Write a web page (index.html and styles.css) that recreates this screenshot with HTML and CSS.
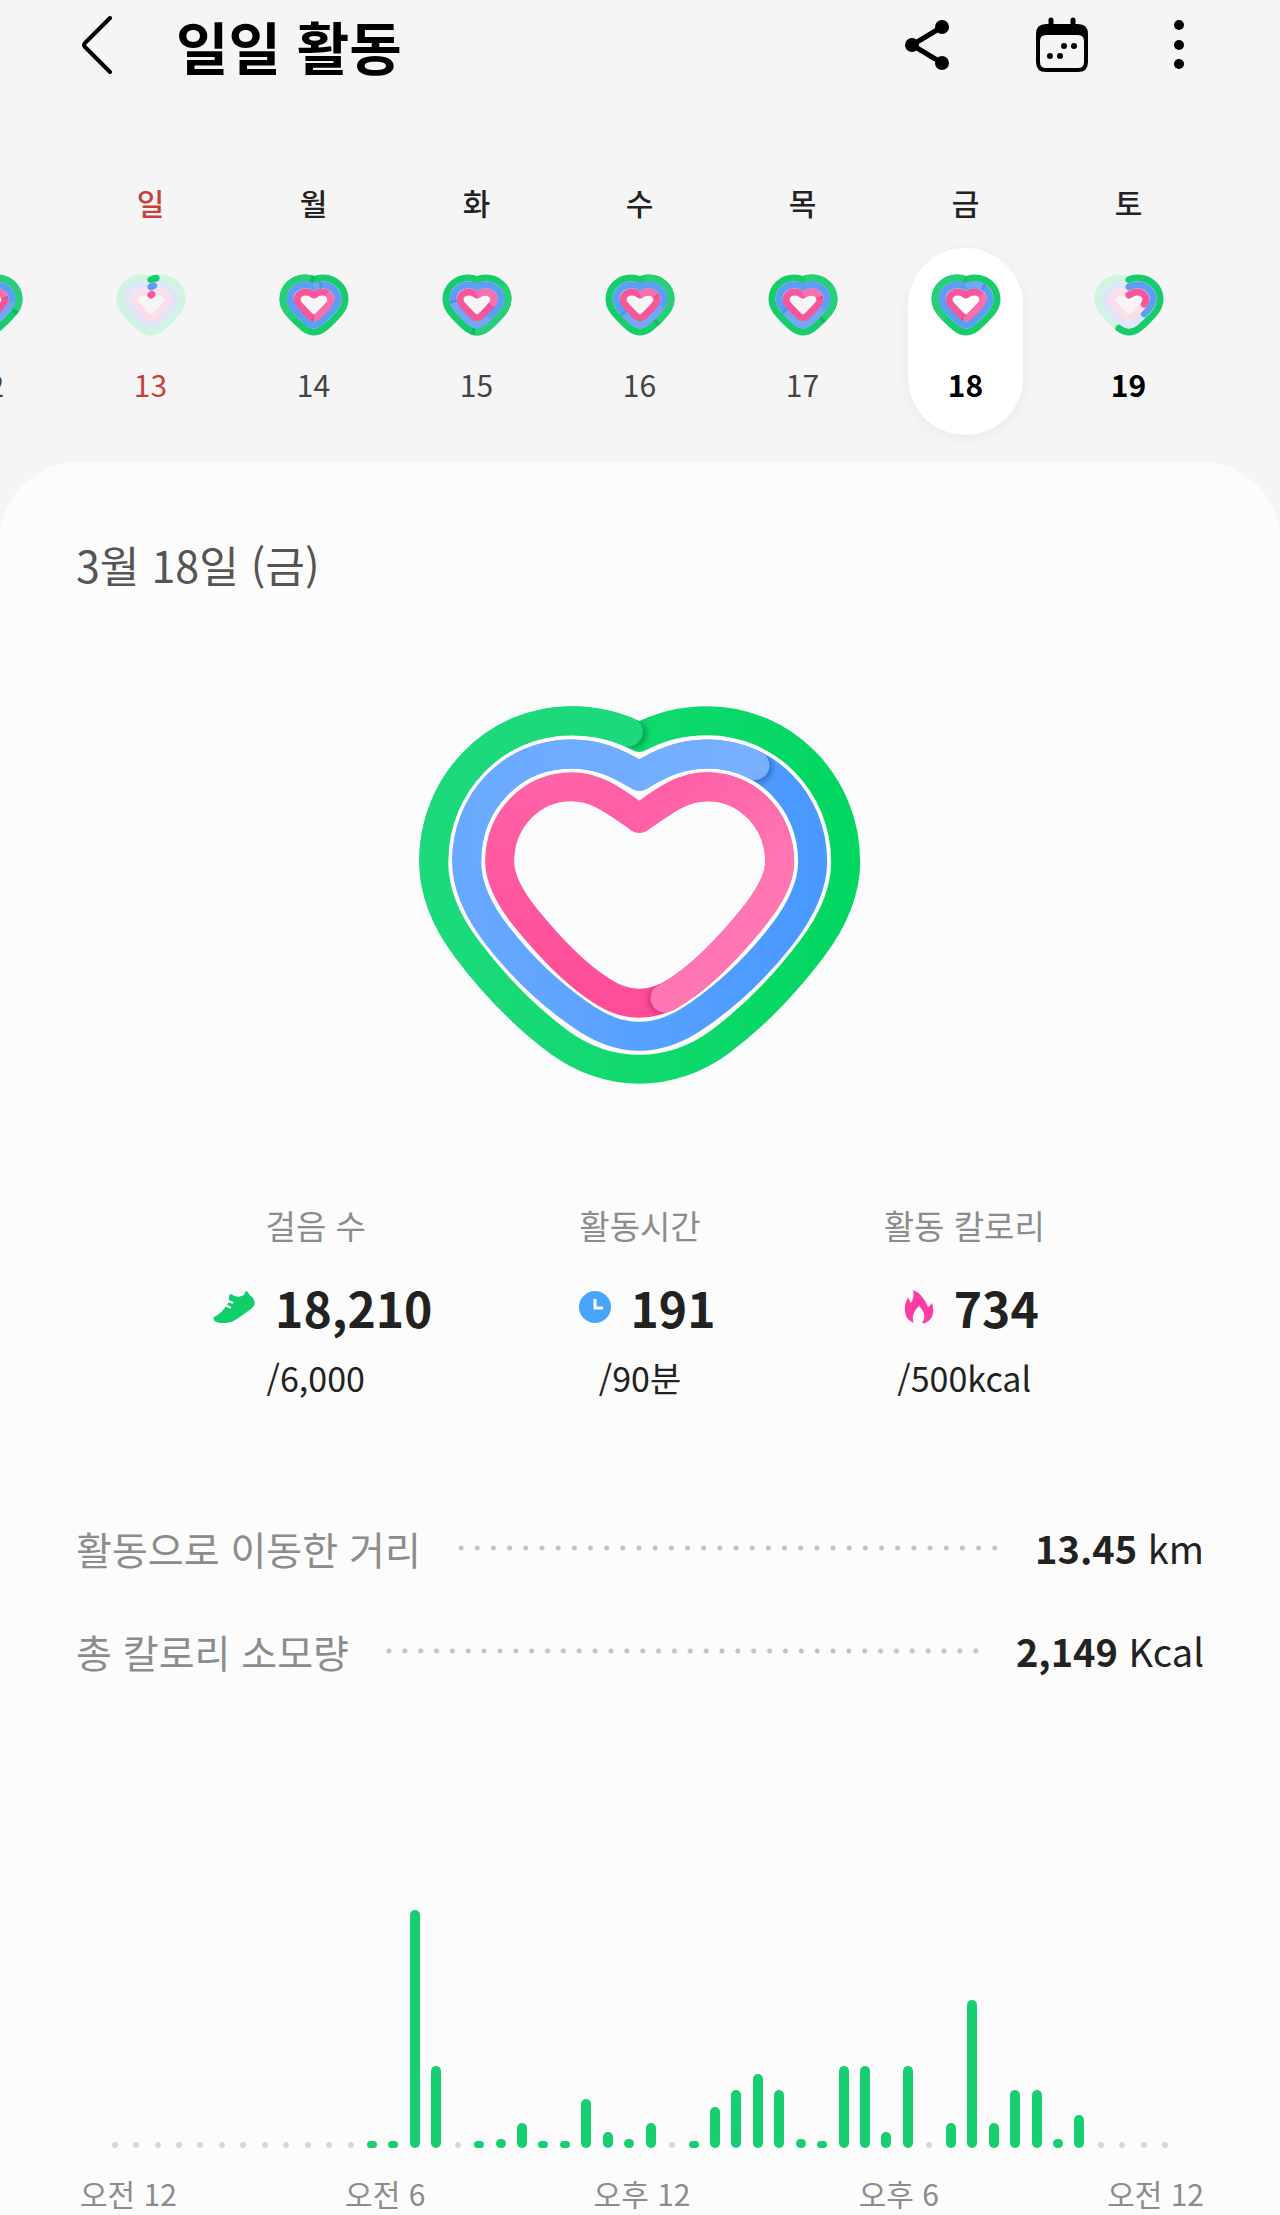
FILE: index.html
```html
<!DOCTYPE html>
<html lang="ko">
<head>
  <meta charset="UTF-8" />
  <meta name="viewport" content="width=device-width, initial-scale=1.0"/>
  <title>일일 활동</title>
  <link rel="stylesheet" href="styles.css">
</head>
<body>
  <header class="top-bar">
    <button class="icon-btn back" aria-label="뒤로">
      <svg width="30" height="58" viewBox="0 0 30 58"><path d="M28 2 L3 27 Q1 29 3 31 L28 56" fill="none" stroke="#000" stroke-width="4" stroke-linecap="round"/></svg>
    </button>
    <h1>일일 활동</h1>
    <div class="actions">
      <button class="icon-btn" aria-label="공유">
        <svg width="46" height="52" viewBox="0 0 46 52">
          <path d="M38 8 L8 26 L38 44" fill="none" stroke="#000" stroke-width="5"/>
          <circle cx="38" cy="8" r="7"/><circle cx="8" cy="26" r="7"/><circle cx="38" cy="44" r="7"/>
        </svg>
      </button>
      <button class="icon-btn" aria-label="달력">
        <svg width="52" height="56" viewBox="0 0 52 56">
          <path d="M15 3 V10 M37 3 V10" stroke="#000" stroke-width="5" stroke-linecap="round"/>
          <path fill-rule="evenodd" d="M10 7 H42 Q52 7 52 17 V45 Q52 55 42 55 H10 Q0 55 0 45 V17 Q0 7 10 7 Z M10 18 Q4 18 4 24 V45 Q4 51 10 51 H42 Q48 51 48 45 V24 Q48 18 42 18 Z"/>
          <circle cx="28" cy="29" r="3"/><circle cx="38" cy="29" r="3"/><circle cx="14" cy="39" r="3"/><circle cx="24" cy="39" r="3"/>
        </svg>
      </button>
      <button class="icon-btn" aria-label="더보기">
        <svg width="10" height="50" viewBox="0 0 10 50"><circle cx="5" cy="5" r="5"/><circle cx="5" cy="25" r="5"/><circle cx="5" cy="44" r="5"/></svg>
      </button>
    </div>
  </header>

  <nav class="week" id="week"></nav>

  <main class="card">
    <h2 class="date">3월 18일 (금)</h2>

    <svg class="heart" viewBox="0 0 1440 1260" role="img" aria-label="활동 하트">
      <defs>
        <linearGradient id="green" gradientUnits="userSpaceOnUse" x1="58" y1="0" x2="1380" y2="0">
          <stop offset="0" stop-color="#1cda7c"/><stop offset="0.5" stop-color="#10d96e"/><stop offset="1" stop-color="#00d75f"/>
        </linearGradient>
        <linearGradient id="blue" gradientUnits="userSpaceOnUse" x1="158" y1="0" x2="1280" y2="0">
          <stop offset="0" stop-color="#68a9ff"/><stop offset="0.5" stop-color="#58a1ff"/><stop offset="1" stop-color="#4898ff"/>
        </linearGradient>
        <linearGradient id="blueLap" gradientUnits="userSpaceOnUse" x1="158" y1="0" x2="1100" y2="0">
          <stop offset="0" stop-color="#68a9ff"/><stop offset="1" stop-color="#78b1ff"/>
        </linearGradient>
        <linearGradient id="pink" gradientUnits="userSpaceOnUse" x1="0" y1="278" x2="0" y2="1010">
          <stop offset="0" stop-color="#ff62a7"/><stop offset="1" stop-color="#ff4c97"/>
        </linearGradient>
        <linearGradient id="pinkLap" gradientUnits="userSpaceOnUse" x1="718" y1="400" x2="1000" y2="700">
          <stop offset="0" stop-color="#ff5fa5"/><stop offset="1" stop-color="#ff76b3"/>
        </linearGradient>
        <filter id="soft" x="-50%" y="-50%" width="200%" height="200%"><feGaussianBlur stdDeviation="9"/></filter>
        <path id="ringG" d="M718 172 C780 138 850 122 922 122 C1150 122 1337 310 1337 545 C1337 635 1296 726 1236 806 C1157 911 1062 1009 962 1084 C887 1140 800 1168 718 1168 C636 1168 549 1140 474 1084 C374 1009 279 911 200 806 C140 726 101 635 101 545 C101 310 286 122 514 122 C586 122 656 138 718 172 Z"/>
        <path id="ringB" d="M718 289 C790 243 850 222 922 222 C1100 222 1238 365 1238 545 C1238 622 1198 697 1143 768 C1073 858 982 944 897 1003 C838 1046 780 1069 718 1069 C656 1069 598 1046 539 1003 C454 944 363 858 293 768 C238 697 200 622 200 545 C200 365 336 222 514 222 C586 222 646 243 718 289 Z"/>
        <path id="ringP" d="M718 415 C790 365 845 320 922 320 C1042 320 1139 420 1139 545 C1139 600 1105 655 1060 712 C990 798 905 885 835 930 C795 957 760 970 718 970 C676 970 641 957 601 930 C531 885 446 798 376 712 C331 655 299 600 299 545 C299 420 394 320 514 320 C591 320 646 365 718 415 Z"/>
        <mask id="maskG" maskUnits="userSpaceOnUse" x="0" y="0" width="1440" height="1260"><use href="#ringG" class="band" stroke="#fff"/></mask>
        <mask id="maskB" maskUnits="userSpaceOnUse" x="0" y="0" width="1440" height="1260"><use href="#ringB" class="band" stroke="#fff"/></mask>
        <mask id="maskP" maskUnits="userSpaceOnUse" x="0" y="0" width="1440" height="1260"><use href="#ringP" class="band" stroke="#fff"/></mask>
      </defs>

      <use href="#ringG" class="band" stroke="url(#green)"/>
      <g mask="url(#maskG)"><circle cx="696" cy="162" r="44" fill="#067a3c" opacity="0.6" filter="url(#soft)"/></g>
      <path class="band" stroke="#1cda7c" d="M101 545 C101 310 286 122 514 122 C573 122 632 133 685 156"/>

      <use href="#ringB" class="band" stroke="url(#blue)"/>
      <g mask="url(#maskB)"><circle cx="1072" cy="264" r="44" fill="#1d4f96" opacity="0.6" filter="url(#soft)"/></g>
      <path class="band" stroke="url(#blueLap)" d="M200 545 C200 365 336 222 514 222 C586 222 646 243 718 289 C790 243 850 222 922 222 C973 222 1022 234 1065 256"/>

      <use href="#ringP" class="band" stroke="url(#pink)"/>
      <g mask="url(#maskP)"><circle cx="790" cy="958" r="44" fill="#8f1c50" opacity="0.5" filter="url(#soft)"/></g>
      <path class="band" stroke="url(#pinkLap)" d="M718 415 C790 365 845 320 922 320 C1042 320 1139 420 1139 545 C1139 600 1105 655 1060 712 C990 798 905 885 835 930 C820 941 808 949 795 954"/>
    </svg>

    <section class="stats">
      <div class="stat">
        <div class="label">걸음 수</div>
        <div class="value">
          <svg width="42" height="32" viewBox="0 0 42 32">
            <path fill="#10cf6b" d="M1 26 Q6 24 11 18 L16 11 Q15 4 18 3 Q24 8 31 4 Q32 0 34 0 Q36 4 40 7 Q44 13 38 18 L24 28 Q17 33 7 32 Q-1 31 1 26 Z"/>
            <path d="M13 9 L20 12 M12 14 L18 17" stroke="#fcfcfc" stroke-width="2"/>
          </svg>
          <strong>18,210</strong>
        </div>
        <div class="goal">/6,000</div>
      </div>
      <div class="stat">
        <div class="label">활동시간</div>
        <div class="value">
          <svg width="32" height="32" viewBox="0 0 32 32"><circle cx="16" cy="16" r="16" fill="#48a5ff"/><path d="M16 8 V17 H24" fill="none" stroke="#fff" stroke-width="3"/></svg>
          <strong>191</strong>
        </div>
        <div class="goal">/90분</div>
      </div>
      <div class="stat">
        <div class="label">활동 칼로리</div>
        <div class="value">
          <svg width="30" height="34" viewBox="0 0 30 34"><path fill="#ff3ba5" d="M9 0 Q19 4 24 17 Q26 16 28 13 Q32 27 23 32 Q20 34 18 33 Q24 25 15 16 Q6 25 10 33 Q2 30 1 22 Q0 14 4 8 Q6 9 6 13 Q11 9 9 0 Z"/></svg>
          <strong>734</strong>
        </div>
        <div class="goal">/500kcal</div>
      </div>
    </section>

    <section class="totals">
      <div class="row"><span class="name">활동으로 이동한 거리</span><span class="dots"></span><span class="amount"><strong>13.45</strong> km</span></div>
      <div class="row"><span class="name">총 칼로리 소모량</span><span class="dots"></span><span class="amount"><strong>2,149</strong> Kcal</span></div>
    </section>

    <div class="chart" id="chart"></div>
    <div class="axis">
      <span>오전 12</span><span>오전 6</span><span>오후 12</span><span>오후 6</span><span>오전 12</span>
    </div>
  </main>

  <script>
    // small heart rings, outside to inside
    const rings = [
      { color: '#17cd6b', lap: '#26cf78', pale: '#cff4e0', seam: '#14b863',
        d: 'M35 6 C38 4 41 4 44 4 C56 4 66 13 66 25 C66 34 60 40 54 46 C47 53 42 58 35 58 C28 58 23 53 16 46 C10 40 4 34 4 25 C4 13 14 4 26 4 C29 4 32 4 35 6 Z' },
      { color: '#5a9ff5', lap: '#70a8f6', pale: '#dfe6fa', seam: '#5090e4',
        d: 'M35 13 C38 11 41 11 44 11 C52 11 59 17 59 25 C59 31 54 36 49 41 C43 47 40 51 35 51 C30 51 27 47 21 41 C16 36 11 31 11 25 C11 17 18 11 26 11 C29 11 32 11 35 13 Z' },
      { color: '#f5569c', lap: '#f770ae', pale: '#fadfea', seam: '#e44c8e',
        d: 'M35 21 C38 19 40 18 43 18 C48 18 52 21 52 26 C52 29 48 33 44 37 C40 41 38 44 35 44 C32 44 30 41 26 37 C22 33 18 29 18 26 C18 21 22 18 27 18 C30 18 32 19 35 21 Z' }
    ];

    // progress in percent of the goal for steps, time, calories
    const days = [
      { name: '', date: 12, done: [130, 160, 120] },
      { name: '일', date: 13, done: [3, 2, 1], type: 'sunday' },
      { name: '월', date: 14, done: [198, 104, 150] },
      { name: '화', date: 15, done: [151, 174, 130] },
      { name: '수', date: 16, done: [138, 164, 118] },
      { name: '목', date: 17, done: [136, 166, 120] },
      { name: '금', date: 18, done: [199, 112, 152], type: 'selected' },
      { name: '토', date: 19, done: [56, 36, 28], type: 'today' }
    ];

    function drawRing(ring, percent) {
      const path = (color, from, length, cap) =>
        `<path d="${ring.d}" pathLength="100" stroke="${color}" stroke-dasharray="${length} 200" stroke-dashoffset="${-from}" stroke-linecap="${cap}"/>`;
      if (percent < 100) {
        return `<path d="${ring.d}" stroke="${ring.pale}"/>` + path(ring.color, 0, percent, 'round');
      }
      const rest = percent - 100;
      const lap = Math.min(35, rest);
      return `<path d="${ring.d}" stroke="${ring.color}"/>` + path(ring.seam, rest, 2, 'butt') + path(ring.lap, rest - lap, lap, 'butt');
    }

    document.getElementById('week').innerHTML = days.map(day => `
      <div class="day ${day.type || ''}">
        <span class="weekday">${day.name}</span>
        <button class="pill">
          <svg width="70" height="62" viewBox="0 0 70 62" fill="none" stroke-width="7" stroke-linejoin="round">
            ${rings.map((ring, i) => drawRing(ring, day.done[i])).join('')}
          </svg>
          <span class="num">${day.date}</span>
        </button>
      </div>`).join('');

    // half hour buckets, 0 = nothing recorded
    const steps = [
      0, 0, 0, 0, 0, 0, 0, 0, 0, 0, 0, 0, 7, 7, 238, 82, 0, 7, 9, 25, 7, 7, 49, 16, 9,
      25, 0, 7, 41, 58, 74, 58, 9, 7, 82, 82, 16, 82, 0, 25, 148, 25, 58, 58, 9, 33, 0, 0, 0, 0
    ];
    document.getElementById('chart').innerHTML = steps.map(value =>
      value ? `<div class="slot"><i class="bar" style="height:${value}px"></i></div>` : '<div class="slot"><i class="empty"></i></div>'
    ).join('');
  </script>
</body>
</html>
```
FILE: styles.css
```css
:root {
  --bg-color: #f5f5f5;
  --card-color: #fcfcfc;
  --text-color: #222;
  --muted-color: #8c8c8c;
  --green: #17cf70;
}
* {
  box-sizing: border-box;
}
body {
  margin: 0;
  font-family: "Noto Sans CJK KR", "Noto Sans", sans-serif;
  background: var(--bg-color);
  color: var(--text-color);
  overflow-x: hidden;
}
h1, h2 {
  margin: 0;
}
button {
  font: inherit;
  color: inherit;
  background: none;
  border: none;
  padding: 0;
  cursor: pointer;
}
svg {
  display: block;
  flex: none;
}
.top-bar {
  display: flex;
  align-items: center;
  height: 90px;
  padding: 0 96px 0 82px;
}
.top-bar h1 {
  margin-left: 64px;
  font-size: 57px;
  line-height: 80px;
  font-weight: 700;
  color: #000;
}
.actions {
  display: flex;
  align-items: center;
  gap: 86px;
  margin-left: auto;
}
.week {
  display: flex;
  margin: 92px 0 27px -94px;
}
.day {
  flex: 0 0 163px;
  display: flex;
  flex-direction: column;
  align-items: center;
  gap: 26px;
}
.weekday {
  height: 40px;
  font-size: 30px;
  line-height: 40px;
  font-weight: 500;
}
.pill {
  display: flex;
  flex-direction: column;
  align-items: center;
  gap: 30px;
  width: 115px;
  padding: 26px 0 33px;
  border-radius: 58px;
}
.num {
  font-size: 30px;
  line-height: 36px;
  color: #444;
}
.sunday .weekday,
.sunday .num {
  color: #c8403c;
}
.selected .pill {
  background: #fff;
  box-shadow: 0 3px 14px rgba(0, 0, 0, 0.05);
}
.selected .num,
.today .num {
  font-weight: 700;
  color: #000;
}
.card {
  padding: 72px 0 2px;
  background: var(--card-color);
  border-radius: 78px 78px 0 0;
}
.date {
  padding: 0 76px;
  font-size: 43px;
  line-height: 60px;
  font-weight: 400;
  color: #555;
}
.heart {
  width: 480px;
  height: 420px;
  margin: 86px auto 105px;
}
.band {
  fill: none;
  stroke-width: 87px;
  stroke-linejoin: round;
  stroke-linecap: round;
}
.stats {
  display: grid;
  grid-template-columns: repeat(3, 1fr);
  padding: 0 12%;
  text-align: center;
}
.label {
  font-size: 33px;
  line-height: 40px;
  color: var(--muted-color);
}
.value {
  display: flex;
  justify-content: center;
  align-items: center;
  gap: 20px;
  margin: 32px 0 21px;
  padding-left: 14px;
  font-size: 48px;
  line-height: 60px;
}
.goal {
  font-size: 34px;
  line-height: 40px;
}
.totals {
  display: flex;
  flex-direction: column;
  gap: 43px;
  padding: 0 76px;
  margin-top: 120px;
}
.row {
  display: flex;
  align-items: center;
  gap: 32px;
  line-height: 60px;
}
.name {
  font-size: 39px;
  color: var(--muted-color);
}
.dots {
  flex: 1;
  height: 6px;
  background: radial-gradient(circle, #c2c2c2 2px, transparent 3px) 0 0 / 16px 6px round;
}
.amount {
  font-size: 38px;
}
.chart {
  display: flex;
  align-items: flex-end;
  height: 238px;
  margin-top: 229px;
  padding: 0 104px;
}
.slot {
  flex: 1;
  display: flex;
  justify-content: center;
}
.bar {
  width: 10px;
  border-radius: 5px;
  background: var(--green);
}
.empty {
  width: 6px;
  height: 6px;
  border-radius: 50%;
  background: #d8d8d8;
}
.axis {
  display: grid;
  grid-template-columns: repeat(5, 1fr);
  margin: 25px -4px 0 0;
  font-size: 30px;
  line-height: 40px;
  text-align: center;
  color: var(--muted-color);
}
```
